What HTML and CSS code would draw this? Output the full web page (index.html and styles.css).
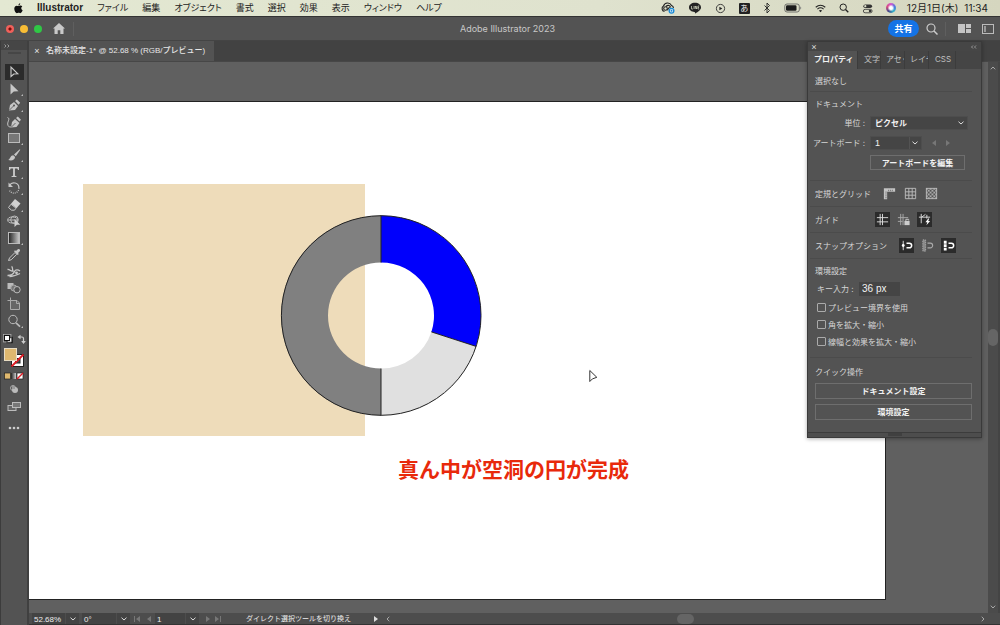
FILE: index.html
```html
<!DOCTYPE html>
<html lang="ja">
<head>
<meta charset="utf-8">
<title>Adobe Illustrator 2023</title>
<link rel="stylesheet" href="styles.css">
</head>
<body>
<header class="menubar">
  <svg class="apple" viewBox="0 0 10 12"><path d="M6.9 0.3C6.9 1.6 6 2.6 4.9 2.7C4.8 1.5 5.8 .5 6.9 .3ZM5 3.3C5.6 3.3 6.2 2.8 7.1 2.8C8 2.8 8.8 3.2 9.2 3.9C7.5 4.9 7.8 7.3 9.6 8C9.1 9.4 8 11.2 7 11.2C6.3 11.2 6 10.8 5.1 10.8C4.2 10.8 3.9 11.2 3.2 11.2C1.9 11.2 .3 8.5 .3 6.3C.3 4.1 1.7 2.9 3 2.9C3.9 2.9 4.5 3.3 5 3.3Z"/></svg>
  <nav class="menus">
    <a href="#" class="app">Illustrator</a>
    <a href="#">ファイル</a><a href="#">編集</a><a href="#">オブジェクト</a><a href="#">書式</a><a href="#">選択</a><a href="#">効果</a><a href="#">表示</a><a href="#">ウィンドウ</a><a href="#">ヘルプ</a>
  </nav>
  <div class="tray">
    <svg class="i14" viewBox="0 0 14 12"><g fill="none" stroke="#222" stroke-width="1.1"><path d="M3.5 9.5A3 3 0 0 1 2.5 4A4.3 4.3 0 0 1 10.5 3.5A3 3 0 0 1 12.5 6"/><circle cx="4.5" cy="6.5" r="1.8"/><path d="M5 4.5C7 2.5 9.5 3.5 9.5 5.5M6 8C7.5 7.5 7.5 5 9 5"/></g><circle cx="10.5" cy="8.8" r="3" fill="#1b8bd8"/><path d="M9.5 7.5h2v2.5h-2z" fill="none" stroke="#fff" stroke-width=".6"/></svg>
    <svg class="i14" viewBox="0 0 14 12"><path d="M7 .8C10.5 .8 13 2.9 13 5.5C13 8.2 9.5 10 7 11.8C7.3 10.5 7 10.2 6.5 10C3.5 9.8 1 8 1 5.5C1 2.9 3.5 .8 7 .8Z" fill="#222"/><path d="M3.5 4v3h1.5M6 4v3M7.2 7V4l1.5 3V4M11.2 4H10v3h1.2M10 5.5h1" fill="none" stroke="#d9dcc5" stroke-width=".7"/></svg>
    <svg class="i12" viewBox="0 0 12 12"><circle cx="6" cy="6" r="4.5" fill="none" stroke="#333"/><path d="M4.8 4v4l3.2-2z" fill="#222"/></svg>
    <span class="ime">あ</span>
    <svg class="i8" viewBox="0 0 8 12"><path d="M1.5 3.5l5 5L4 11V1l2.5 2.5-5 5" fill="none" stroke="#222" stroke-width=".9"/></svg>
    <svg class="i18" viewBox="0 0 18 10"><rect x=".8" y="1" width="14.5" height="8" rx="2.2" fill="none" stroke="#555" stroke-width=".8"/><rect x="2" y="2.2" width="10.5" height="5.6" rx="1.2" fill="#1b1b1b"/><path d="M16.3 3.5v3c1.2-.5 1.2-2.5 0-3z" fill="#777"/></svg>
    <svg class="i12" viewBox="0 0 12 10"><g fill="none" stroke="#222" stroke-width="1.2"><path d="M.8 3.6Q6-.8 11.2 3.6M2.6 5.6Q6 2.8 9.4 5.6"/></g><path d="M4.2 7.2Q6 5.8 7.8 7.2L6 9.2z" fill="#222"/></svg>
    <svg class="i10" viewBox="0 0 10 10"><circle cx="4.2" cy="4.2" r="3.2" fill="none" stroke="#222"/><path d="M6.5 6.5L9.3 9.3" stroke="#222" stroke-width="1.3"/></svg>
    <svg class="i12" viewBox="0 0 12 12"><rect x="1.5" y="1.5" width="9.5" height="4" rx="2" fill="#333"/><circle cx="3.6" cy="3.5" r="1.2" fill="#dde0ca"/><rect x="1.5" y="6.9" width="9.5" height="3.8" rx="1.9" fill="none" stroke="#333" stroke-width=".9"/><circle cx="8.8" cy="8.8" r="1.4" fill="#333"/></svg>
    <span class="siri"></span>
  </div>
  <time class="clock"><span>12月1日(木)</span><span>11:34</span></time>
</header>

<div class="titlebar">
  <div class="lights"><i class="red"></i><i class="yellow"></i><i class="green"></i></div>
  <svg class="home" viewBox="0 0 12 11"><path d="M6 0L12 5.6H10.5V11H7.3V7.3H4.7V11H1.5V5.6H0z" fill="#c9c9c9"/></svg>
  <span class="vline"></span>
  <h1>Adobe Illustrator 2023</h1>
  <button class="share">共有</button>
  <svg class="find" viewBox="0 0 12 12"><circle cx="5" cy="5" r="4" fill="none" stroke="#ccc" stroke-width="1.2"/><path d="M8 8l3.5 3.5" stroke="#ccc" stroke-width="1.5"/></svg>
  <span class="vline"></span>
  <svg class="arrange" viewBox="0 0 13 9"><path d="M0 0h7v9H0zM8 0h5v4H8zM8 5h5v4H8z" fill="#c4c4c4"/></svg>
  <svg class="wspace" viewBox="0 0 12 10"><rect x=".5" y=".5" width="11" height="9" fill="none" stroke="#bbb"/><path d="M2 2h2v6H2z" fill="#999"/></svg>
</div>

<div class="work">
  <aside class="toolbar">
    <div class="collapse"><svg viewBox="0 0 6 4"><path d="M.5 .5L2 2 .5 3.5M3.5 .5L5 2 3.5 3.5" fill="none" stroke="#bbb" stroke-width=".7"/></svg></div>
    <div class="grip"></div>
    <div class="tools">
      <button class="on" aria-label="選択"><svg viewBox="0 0 16 16"><path d="M5 3v9.5l2.8-2.5 4-.2z" fill="none" stroke="#ccc" stroke-width="1.1"/></svg></button>
      <button class="sub" aria-label="ダイレクト選択"><svg viewBox="0 0 16 16"><path d="M4.5 2.5v11l3.3-3.1 4.7-.2z" fill="#c6c6c6"/></svg></button>
      <button class="sub" aria-label="ペン"><svg viewBox="0 0 16 16"><path d="M3 13.5L4 8l4-3 4 4-3 4zM9 4l1.8-1.6 3.4 3.4L12.6 7.8z" fill="#c6c6c6"/><path d="M3.5 13l4-4" stroke="#535353" stroke-width=".8"/><circle cx="8" cy="8.5" r="1" fill="#535353"/></svg></button>
      <button aria-label="曲線"><svg viewBox="0 0 16 16"><path d="M5 13.5L6 8l3-3 4.5 4-3 4zM10 4l1.8-1.6 3.2 3.4-1.5 1.6z" fill="#c6c6c6"/><path d="M5.5 13l4-4" stroke="#535353" stroke-width=".8"/><path d="M1.5 3.5c3 1 0 4 .2 6.5 .2 2.5 1.3 3 3.3 3" fill="none" stroke="#c6c6c6"/></svg></button>
      <button class="sub" aria-label="長方形"><svg viewBox="0 0 16 16"><rect x="2.5" y="3.5" width="11" height="9" fill="#777" stroke="#bbb"/></svg></button>
      <button class="sub" aria-label="ブラシ"><svg viewBox="0 0 16 16"><path d="M13.8 2.2L8 7.5l1.8 1.8 4.5-6.6zM7.3 8.2c-3 0-2.5 3-5 4.8 3.5 1 6.5 0 6.8-3z" fill="#c6c6c6"/></svg></button>
      <button class="sub" aria-label="文字"><svg viewBox="0 0 16 16"><path d="M3 3h10v3h-1L11.3 4.4H8.9v7.3l1.6 .5v.8h-5v-.8l1.6-.5V4.4H4.7L4 6H3z" fill="#ccc"/></svg></button>
      <button class="sub" aria-label="回転"><svg viewBox="0 0 16 16"><path d="M3.5 5.5A5 5 0 0 1 12.9 8" fill="none" stroke="#c6c6c6" stroke-width="1.2"/><path d="M12.9 8A5 5 0 0 1 3.5 10.5" fill="none" stroke="#c6c6c6" stroke-width="1.2" stroke-dasharray="1 1"/><path d="M2.5 2.5v4.5H7z" fill="#c6c6c6"/></svg></button>
      <button class="sub" aria-label="消しゴム"><svg viewBox="0 0 16 16"><path d="M9 2l5.5 4.5-4 4.8-5.5-4.5z" fill="#d0d0d0"/><path d="M5 7.2l5 4-1.5 2H5.5L2.5 10.5z" fill="none" stroke="#c6c6c6"/></svg></button>
      <button aria-label="シェイプ形成"><svg viewBox="0 0 16 16"><g fill="none" stroke="#bbb"><ellipse cx="6.5" cy="7" rx="4.8" ry="3"/><circle cx="8.5" cy="6.8" r="3.8"/><path d="M2 7h10"/></g><path d="M8.5 6v8l2.4-2.2 3.4-.1z" fill="#d0d0d0"/></svg></button>
      <button class="sub" aria-label="グラデーション"><svg viewBox="0 0 16 16"><defs><linearGradient id="tg"><stop stop-color="#222"/><stop offset="1" stop-color="#ccc"/></linearGradient></defs><rect x="2.5" y="2.5" width="11" height="11" fill="url(#tg)" stroke="#bbb"/></svg></button>
      <button aria-label="スポイト"><svg viewBox="0 0 16 16"><path d="M2.5 13.5l1-2.5 5.5-5.5 1.8 1.8L5.2 12.8z" fill="none" stroke="#c6c6c6"/><path d="M8 4.3l1-1 1 .8 1.8-1.9c1.5-1 3 .8 2 2L12 6l.8 1-1 1z" fill="#c6c6c6"/></svg></button>
      <button aria-label="ワープ"><svg viewBox="0 0 16 16"><path d="M1.5 12.5C6 12.5 7.5 11 8.500 8.500C9.500 6.500 12 6.500 14 8M3.500 13.500C8 13.500 10 12.500 14 10.500M1.500 6.500C4 6 4.500 9 7.500 8M5.500 3.500C7.500 4 5.500 7 7.500 8.500" fill="none" stroke="#c6c6c6" stroke-width="1.300"/><circle cx="10.500" cy="9.800" r="1.400" fill="#c6c6c6"/></svg></button>
      <button aria-label="ブレンド"><svg viewBox="0 0 16 16"><path d="M1.5 3h6v6h-6z" fill="#bbb"/><circle cx="7.8" cy="8" r="3" fill="#777" stroke="#aaa"/><circle cx="11" cy="9.7" r="3.2" fill="#535353" stroke="#bbb"/></svg></button>
      <button aria-label="アートボード"><svg viewBox="0 0 16 16"><path d="M4.5 1.5v3M1.5 4.5h3M4.5 4.5H11L13.5 7v6.5h-9z" fill="#666" stroke="#aaa"/><path d="M10.5 4.5V7.5h3" fill="none" stroke="#aaa"/></svg></button>
      <button class="sub" aria-label="ズーム"><svg viewBox="0 0 16 16"><circle cx="7" cy="6.5" r="4.2" fill="none" stroke="#bbb"/><path d="M10 9.8l4 3.8" stroke="#bbb" stroke-width="1.6"/></svg></button>
    </div>
    <svg class="swatches" viewBox="0 0 28 110">
      <rect x="7" y="7.5" width="5" height="5" fill="#fff" stroke="#111" stroke-width="1.4"/><rect x="4.5" y="5.5" width="5" height="5" fill="#fff" stroke="#111"/><rect x="3.5" y="4.5" width="7.5" height="7.5" fill="none" stroke="#bbb" stroke-width=".6"/>
      <path d="M19.5 7h2.5q1.5 0 1.5 1.5V12" fill="none" stroke="#ccc" stroke-width="1.2"/><path d="M17.5 7l3-2.3v4.6zM23.5 14l-2.3-3h4.6z" fill="#ccc"/>
      <rect x="11.5" y="24.5" width="12" height="12" fill="#fff" stroke="#222"/><rect x="15.5" y="28.5" width="4.5" height="4.5" fill="#535353" stroke="#222"/><path d="M11.5 36.5l12-12" stroke="#e01b24" stroke-width="1.8"/>
      <rect x="4.5" y="18.5" width="12" height="12" fill="#dfb86f" stroke="#e8dcc3"/>
      <rect x="4.5" y="43" width="6" height="6" fill="#dfb86f" stroke="#222" stroke-width=".7"/><rect x="11" y="43" width="5" height="6" fill="url(#tg)"/><rect x="17" y="43" width="6" height="6" fill="#fff" stroke="#222" stroke-width=".7"/><path d="M17 49l6-6" stroke="#e01b24" stroke-width="1.4"/>
      <circle cx="13" cy="58" r="2.5" fill="none" stroke="#aaa"/><circle cx="15" cy="60" r="3" fill="#bbb"/><path d="M12 56h3v3h-3z" fill="#999"/>
      <rect x="8" y="75.5" width="8" height="5" fill="#666" stroke="#bbb"/><rect x="12.5" y="72.5" width="8" height="5" fill="#777" stroke="#bbb"/>
      <g fill="#ccc"><circle cx="10" cy="98" r="1.3"/><circle cx="14" cy="98" r="1.3"/><circle cx="18" cy="98" r="1.3"/></g>
    </svg>
  </aside>

  <main class="doc">
    <div class="tabstrip"><div class="tab"><button class="x" aria-label="閉じる">×</button><span>名称未設定-1* @ 52.68 % (RGB/プレビュー)</span></div></div>
    <div class="view">
      <div class="canvas">
        <div class="artboard">
          <svg class="art" viewBox="29 102 856 497">
            <rect x="83" y="184" width="282" height="252" fill="#eedcba"/>
            <path d="M381 215.500A100 100 0 0 1 476.100 346.400L431.400 331.900A53 53 0 0 0 381 262.500Z" fill="#0000fc"/>
            <path d="M476.100 346.400A100 100 0 0 1 381 415.500V368.500A53 53 0 0 0 431.400 331.900Z" fill="#e0e0e0"/>
            <path d="M381 415.500A100 100 0 0 1 381 215.500V262.500A53 53 0 0 0 381 368.500Z" fill="#808080"/>
            <circle cx="381.200" cy="315.500" r="99.800" fill="none" stroke="#222"/>
            <path d="M381 215.500v47M381 368.500v47M431.400 331.900l44.700 14.500" fill="none" stroke="#222"/>
            <path d="M589.800 370.500v11l2.600-2.600 4.400-1.600z" fill="#fff" stroke="#333"/>
          </svg>
          <p class="caption">真ん中が空洞の円が完成</p>
        </div>
      </div>
      <div class="vscroll"><svg viewBox="0 0 6 4"><path d="M.8 3.3L3 1l2.2 2.3" fill="none" stroke="#aaa"/></svg><i></i><svg viewBox="0 0 6 4"><path d="M.8 .7L3 3 5.2 .7" fill="none" stroke="#aaa"/></svg></div>
    </div>
    <footer class="status">
      <span class="f zoomf">52.68%</span><span class="f dd"><svg viewBox="0 0 6 4"><path d="M.5 .7L3 3 5.5 .7" fill="none" stroke="#ddd"/></svg></span>
      <span class="f rot">0°</span><span class="f dd"><svg viewBox="0 0 6 4"><path d="M.5 .7L3 3 5.5 .7" fill="none" stroke="#ddd"/></svg></span>
      <svg class="nav" viewBox="0 0 20 6"><path d="M1.5 0v6" stroke="#777"/><path d="M7 0v6L3 3zM18 0v6l-4-3z" fill="#777"/></svg>
      <span class="f num">1</span><span class="f dd"><svg viewBox="0 0 6 4"><path d="M.5 .7L3 3 5.5 .7" fill="none" stroke="#ddd"/></svg></span>
      <svg class="nav" viewBox="0 0 20 6"><path d="M18.500 0v6" stroke="#777"/><path d="M4 0v6l4-3zM13 0v6l4-3z" fill="#777"/></svg>
      <span class="msg">ダイレクト選択ツールを切り換え</span>
      <svg class="play" viewBox="0 0 6 6"><path d="M1 0v6l4-3z" fill="#ddd"/></svg>
      <div class="hscroll"><svg viewBox="0 0 4 6"><path d="M3.3 .8L1 3l2.3 2.2" fill="none" stroke="#aaa"/></svg><i></i><svg viewBox="0 0 4 6"><path d="M.7 .8L3 3 .7 5.2" fill="none" stroke="#aaa"/></svg></div>
    </footer>
  </main>
</div>

<section class="panel">
  <div class="phead"><span>×</span><svg viewBox="0 0 6 4"><path d="M2 .5L.5 2 2 3.5M5 .5L3.5 2 5 3.5" fill="none" stroke="#bbb" stroke-width=".7"/></svg></div>
  <div class="ptabs"><button class="cur">プロパティ</button><button class="t2">文字</button><button class="t3">アセッ</button><button class="t3">レイヤ</button><button class="t4">CSS</button></div>
  <div class="sec one"><h2>選択なし</h2></div>
  <div class="sec docs">
    <h2>ドキュメント</h2>
    <div class="row"><label for="unit">単位 :</label><span class="sel"><select id="unit"><option>ピクセル</option></select><svg viewBox="0 0 6 4"><path d="M.5 .7L3 3 5.5 .7" fill="none" stroke="#ddd"/></svg></span></div>
    <div class="row"><label for="ab">アートボード :</label><span class="sel short"><select id="ab"><option>1</option></select><svg viewBox="0 0 6 4"><path d="M.5 .7L3 3 5.5 .7" fill="none" stroke="#ddd"/></svg></span><svg class="prevnext" viewBox="0 0 18 6"><path d="M4 0v6L0 3zM14 0v6l4-3z" fill="#777"/></svg></div>
    <button class="btn edit">アートボードを編集</button>
  </div>
  <div class="sec icons">
    <h2>定規とグリッド</h2>
    <button class="ic first" aria-label="定規"><svg viewBox="0 0 16 16"><path d="M2 2.5h12v3.5H5.5v8H2z" fill="#c4c4c4"/><path d="M5 6.5H3.5M5 8.5H3.5M5 10.5H3.5M5 12.5H3.5M7 5.5V4M9 5.5V4M11 5.5V4" stroke="#555" stroke-width=".7"/></svg></button>
    <button class="ic" aria-label="グリッド"><svg viewBox="0 0 16 16"><path d="M2.5 2.5h11v11h-11zM6.2 2.5v11M9.8 2.5v11M2.5 6.2h11M2.5 9.8h11" fill="none" stroke="#bbb"/></svg></button>
    <button class="ic" aria-label="透明グリッド"><svg viewBox="0 0 16 16"><defs><pattern id="ck" width="4" height="4" patternUnits="userSpaceOnUse"><path d="M0 0h2v2H0zM2 2h2v2H2z" fill="#aaa"/></pattern></defs><rect x="2.5" y="2.5" width="11" height="11" fill="url(#ck)" stroke="#bbb"/></svg></button>
  </div>
  <div class="sec icons">
    <h2>ガイド</h2>
    <button class="ic on g1" aria-label="ガイドを表示"><svg viewBox="0 0 16 16"><path d="M5.5 2v12M8 2v12M2 6h12M2 10.5h12" fill="none" stroke="#ddd"/></svg></button>
    <button class="ic" aria-label="ガイドをロック"><svg viewBox="0 0 16 16"><path d="M5 2v12M7.5 2v12M2 6h11M2 10h5" fill="none" stroke="#aaa"/><path d="M9 9.5h5.5v4.5H9z" fill="#ccc"/><path d="M10.5 9.5V7.8h3V9" fill="none" stroke="#ccc"/></svg></button>
    <button class="ic on" aria-label="スマートガイド"><svg viewBox="0 0 16 16"><path d="M4.5 2v10M2 5.500h12M5 5.500l4-3M10.500 3v4" fill="none" stroke="#ddd"/><path d="M12 7L9 11h2l-1 3 4-4.5h-2l1-2.5z" fill="#fff"/></svg></button>
  </div>
  <div class="sec icons">
    <h2>スナップオプション</h2>
    <button class="ic on s1" aria-label="ポイントにスナップ"><svg viewBox="0 0 16 16"><path d="M4.5 3v10" stroke="#ddd"/><circle cx="4.5" cy="8" r="1.5" fill="#fff"/><path d="M8 5.5h3a2.4 2.4 0 0 1 0 5H8" fill="none" stroke="#fff" stroke-width="1.6"/></svg></button>
    <button class="ic" aria-label="ピクセルにスナップ"><svg viewBox="0 0 16 16"><path d="M3 2h3v12H3z" fill="#888" stroke="#aaa" stroke-dasharray="1.5 1"/><path d="M8 5.5h3a2.4 2.4 0 0 1 0 5H8" fill="none" stroke="#aaa" stroke-width="1.2"/></svg></button>
    <button class="ic on" aria-label="グリッドにスナップ"><svg viewBox="0 0 16 16"><path d="M3 3h3v3H3zM3 6.7h3v2.8H3zM3 10.3h3v3H3z" fill="#fff"/><path d="M8 5.5h3a2.4 2.4 0 0 1 0 5H8" fill="none" stroke="#fff" stroke-width="1.6"/></svg></button>
  </div>
  <div class="sec prefs">
    <h2>環境設定</h2>
    <div class="row key"><label for="key">キー入力 :</label><input id="key" type="text" value="36 px"></div>
    <label class="chk"><input type="checkbox">プレビュー境界を使用</label>
    <label class="chk"><input type="checkbox">角を拡大・縮小</label>
    <label class="chk"><input type="checkbox">線幅と効果を拡大・縮小</label>
  </div>
  <div class="sec quick">
    <h2>クイック操作</h2>
    <button class="btn">ドキュメント設定</button>
    <button class="btn">環境設定</button>
  </div>
  <div class="pfoot"><i></i></div>
</section>
</body>
</html>
```
FILE: styles.css
```css
* { box-sizing: border-box; }
body {
  margin: 0; height: 100vh; overflow: hidden; position: relative;
  display: flex; flex-direction: column;
  background: #535353; color: #d6d6d6;
  font: 8px/12px "Inter", "Noto Sans CJK JP", sans-serif;
}
button, input, select { font: inherit; color: inherit; border: 0; background: none; padding: 0; margin: 0; border-radius: 0; appearance: none; }
h1, h2, p { margin: 0; font-weight: 400; font-size: inherit; }
a { color: inherit; text-decoration: none; }
svg { display: block; flex: none; }

/* system menu bar */
.menubar {
  height: 17px; flex: none; display: flex; align-items: center;
  background: linear-gradient(90deg, #e3e8d2, #dfe2ce 60%, #d5d6bf);
  color: #222; border-bottom: 1px solid #333; padding: 0 12px 0 14px;
  font-size: 9px; white-space: nowrap;
}
.apple { width: 9px; height: 11px; fill: #111; margin-right: 14px; }
.menus { display: flex; gap: 14px; font-feature-settings: "palt"; }
.app { font-weight: 700; font-size: 10px; font-family: "Liberation Sans", sans-serif; }
.tray { margin-left: auto; display: flex; align-items: center; gap: 13px; margin-right: 11px; }
.i14 { width: 14px; height: 12px; }
.i12 { width: 11px; height: 11px; }
.i10 { width: 10px; height: 10px; }
.i8 { width: 8px; height: 12px; }
.i18 { width: 18px; height: 10px; }
.ime { width: 11px; height: 11px; background: #222; color: #eee; line-height: 11px; text-align: center; font-size: 8px; border-radius: 1px; }
.siri { width: 10px; height: 10px; border-radius: 50%; background: radial-gradient(circle, #fff 20%, transparent 50%), conic-gradient(#d35ad0, #4a7be0, #35b5c9, #444a8c, #d94c7e, #d35ad0); }
.clock { display: flex; gap: 6px; font-size: 10px; }

/* window title bar */
.titlebar { height: 24px; flex: none; display: flex; align-items: center; padding: 0 6px; border-bottom: 1px solid #444; position: relative; }
.lights { display: flex; gap: 6px; }
.lights i { width: 8px; height: 8px; border-radius: 50%; }
.red { background: radial-gradient(circle, #7a0d0a 20%, #f0605a 35%); }
.yellow { background: #f8bd35; }
.green { background: #2fc745; }
.home { width: 12px; height: 11px; margin: 0 8px 0 11px; }
.vline { width: 1px; height: 14px; background: #5f5f5f; }
h1 { position: absolute; left: 0; right: 0; text-align: center; font-size: 9px; padding-left: 15px; color: #c8c8c8; }
.share { margin-left: auto; width: 31px; height: 17px; border-radius: 9px; background: #1473e6; color: #fff; font-size: 9px; font-weight: 700; position: relative; }
.find { width: 12px; height: 12px; margin: 0 7px 0 7px; }
.arrange { width: 13px; height: 9px; margin: 0 11px 0 12px; }
.wspace { width: 12px; height: 10px; }

.work { flex: 1; min-height: 0; display: flex; }
.toolbar { width: 29px; flex: none; border-left: 1px solid #3c3c3c; border-right: 2px solid #404040; display: flex; flex-direction: column; }
.collapse { height: 9px; background: #464646; padding: 3px; }
.collapse svg, .phead svg { width: 6px; height: 4px; }
.grip { width: 13px; height: 2px; margin: 2px auto 10px; background: #464646; }
.tools { height: 265px; flex: none; display: flex; flex-direction: column; align-items: center; justify-content: space-between; }
.tools button { width: 19px; height: 16px; position: relative; display: flex; align-items: center; justify-content: center; }
.tools svg { width: 16px; height: 16px; }
.tools .on { background: #2b2b2b; }
.sub::after { content: ""; position: absolute; right: 1px; bottom: 1px; border-bottom: 2px solid #bbb; border-left: 2px solid transparent; }
.swatches { width: 28px; height: 110px; margin: 1px 0 0 -1px; }

.doc { flex: 1; min-width: 0; display: flex; flex-direction: column; }
.tabstrip { height: 21px; flex: none; background: #424242; border-bottom: 1px solid #474747; display: flex; }
.tab { background: #535353; display: flex; align-items: center; gap: 6px; padding: 0 9px 0 5px; color: #e6e6e6; font-family: "Liberation Sans", "Noto Sans CJK JP", sans-serif; font-weight: 500; white-space: nowrap; }
.x { font-size: 9px; width: 6px; }
.view { flex: 1; min-height: 0; display: flex; }
.canvas { flex: 1; min-width: 0; background: #606060; position: relative; overflow: hidden; }
.artboard { position: absolute; left: -1px; top: 39px; width: 858px; height: 499px; background: #fff; border: 1px solid #222; }
.art { width: 856px; height: 497px; }
.caption { position: absolute; left: 369px; top: 351px; font: 700 21px/30px "Noto Sans CJK JP", sans-serif; color: #e8290b; white-space: nowrap; }
.vscroll { width: 12px; flex: none; background: #4b4b4b; border-right: 2px solid #444; display: flex; flex-direction: column; align-items: center; justify-content: space-between; padding: 4px 0; }
.vscroll svg { width: 6px; height: 4px; }
.vscroll i { width: 10px; height: 17px; border-radius: 5px; background: #656565; }

.status { height: 12px; flex: none; display: flex; align-items: center; background: #4d4d4d; border-bottom: 1px solid #333; color: #eee; padding-left: 3px; overflow: hidden; line-height: 14px; white-space: nowrap; }
.f { background: #434343; height: 12px; padding-left: 2px; font-family: "Liberation Sans", sans-serif; }
.zoomf { width: 33px; }
.dd { width: 13px; margin: 0 3px 0 1px; display: flex; align-items: center; padding-left: 4px; }
.dd svg, .sel svg { width: 6px; height: 4px; }
.rot { width: 34px; }
.num { width: 30px; }
.nav { width: 20px; height: 6px; margin: 0 2px 0 0; }
.msg { margin: 0 22px 0 22px; font-size: 7px; }
.play { width: 6px; height: 6px; margin-right: 7px; }
.hscroll { flex: 1; display: flex; align-items: center; justify-content: space-between; padding: 0 15px 0 0; }
.hscroll svg { width: 4px; height: 6px; }
.hscroll i { width: 17px; height: 10px; border-radius: 5px; background: #656565; }

/* floating properties panel */
.panel { position: absolute; top: 41px; right: 18px; width: 175px; background: #535353; border: 1px solid #3a3a3a; box-shadow: 0 1px 4px #0005; display: flex; flex-direction: column; }
.phead { height: 9px; background: #464646; display: flex; align-items: center; justify-content: space-between; padding: 0 4px 0 3px; line-height: 7px; font-size: 9px; }
.ptabs { height: 18px; background: #454545; display: flex; }
.ptabs button { height: 18px; border-right: 1px solid #3c3c3c; overflow: hidden; white-space: nowrap; text-align: left; padding: 0 0 2px 6px; color: #c0c0c0; }
.ptabs .cur { background: #535353; color: #f2f2f2; font-weight: 700; width: 50px; }
.ptabs .t2 { width: 23px; }
.ptabs .t3 { width: 24px; padding-left: 5px; }
.ptabs .t4 { width: 27px; }
.sec { margin: 0 9px 0 2px; padding: 0 0 0 5px; border-bottom: 1px solid #4b4b4b; display: flex; flex-direction: column; }
.one { padding-top: 6px; padding-bottom: 4px; }
.docs { padding-top: 6px; padding-bottom: 10px; }
.row { display: flex; align-items: center; }
.docs .row { height: 15px; margin-bottom: 5px; }
.docs h2 { margin-bottom: 5px; }
.docs label { width: 56px; margin: 0 2px 0 -3px; padding-right: 3px; text-align: right; white-space: nowrap; }
.sel { position: relative; width: 98px; height: 14px; background: #454545; border: 1px solid #4d4d4d; }
.sel select { width: 100%; height: 12px; padding-left: 4px; color: #f2f2f2; font-weight: 700; display: block; }
.sel svg { position: absolute; right: 3px; top: 4px; pointer-events: none; }
.short { width: 52px; }
.short select { font-family: "Liberation Sans", sans-serif; font-size: 9px; font-weight: 400; }
.short::after { content: ""; position: absolute; right: 11px; top: 0; bottom: 0; border-left: 1px solid #535353; }
.prevnext { width: 18px; height: 6px; margin-left: 10px; }
.btn { height: 16px; border: 1px solid #6e6e6e; color: #f2f2f2; font-weight: 700; line-height: 12px; white-space: nowrap; }
.edit { width: 95px; margin-left: 55px; height: 15px; }
.icons { flex-direction: row; align-items: center; height: 26px; }
.ic { width: 15px; height: 15px; margin-left: 6px; flex: none; display: flex; align-items: center; justify-content: center; }
.ic svg { width: 15px; height: 15px; }
.ic.on { background: #2b2b2b; }
.icons h2 { flex: none; width: 60px; white-space: nowrap; }
.first { margin-left: 7px; }
.g1 { margin-left: 0; }
.s1 { margin-left: 24px; }
.prefs { padding-top: 6px; padding-bottom: 7px; }
.key { height: 19px; margin: 2px 0 1px 2px; }
.key label { width: 42px; }
.key input { width: 41px; height: 14px; background: #454545; color: #f2f2f2; font-family: "Liberation Sans", sans-serif; font-size: 10px; padding-left: 3px; }
.chk { display: flex; align-items: center; gap: 2px; height: 17px; margin-left: 2px; }
.chk input { width: 9px; height: 9px; border: 1px solid #aaa; border-radius: 1px; }
.quick { border: 0; padding-top: 8px; padding-bottom: 12px; gap: 5px; margin-right: 9px; }
.pfoot { height: 5px; border-top: 1px solid #3c3c3c; background: #4d4d4d; display: flex; justify-content: center; }
.pfoot i { width: 14px; height: 3px; background: #404040; }
```
